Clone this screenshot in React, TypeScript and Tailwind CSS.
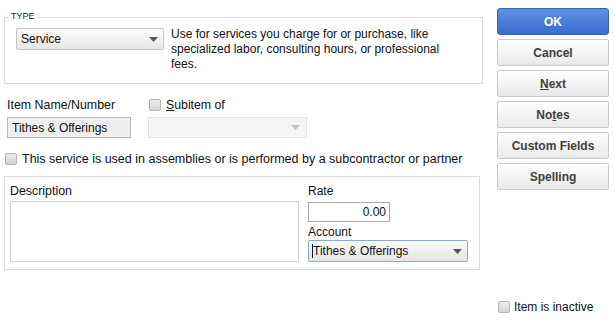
import React from "react";

function Arrow({ light }: { light?: boolean }) {
  return (
    <svg width="9" height="5" viewBox="0 0 9 5" className="shrink-0">
      <path d="M0 0 H9 L4.5 5 Z" fill={light ? "#c4c4c4" : "#555"} />
    </svg>
  );
}

function Check({ className = "" }: { className?: string }) {
  return (
    <span
      className={`inline-block w-[12px] h-[12px] shrink-0 rounded-[2px] border border-[#b4b4b4] bg-gradient-to-b from-[#ececec] to-[#d4d4d4] ${className}`}
    />
  );
}

function Btn({ children, primary }: { children: React.ReactNode; primary?: boolean }) {
  return (
    <div
      className={
        primary
          ? "h-[27px] flex items-center justify-center rounded-[3px] border border-[#3564b8] bg-gradient-to-b from-[#5e91e3] to-[#3a6ccc] text-white font-bold"
          : "h-[27px] flex items-center justify-center rounded-[2px] border border-[#cacaca] bg-gradient-to-b from-[#ffffff] to-[#e9e9e9] text-[#3f3f3f] font-bold"
      }
    >
      {children}
    </div>
  );
}

export default function App() {
  return (
    <div className="w-[615px] h-[327px] bg-white flex font-['Liberation_Sans',Arial,sans-serif] text-[12px] leading-[14px] text-[#111]">
      {/* left part */}
      <div className="w-[479px] ml-[4px] flex flex-col">
        {/* TYPE box */}
        <div className="relative mt-[17px] h-[67px] border border-[#dcdcdc] flex gap-[7px] pl-[11px] pt-[10px]">
          <span className="absolute left-[4px] top-[-8px] bg-white px-[2px] text-[9px] leading-[12px] text-[#222]">TYPE</span>
          <div className="w-[148px] h-[22px] flex items-center justify-between pl-[4px] pr-[5px] border border-[#c6c6c6] rounded-[2px] bg-gradient-to-b from-[#fdfdfd] to-[#e8e8e8]">
            <span>Service</span>
            <Arrow />
          </div>
          <p className="w-[290px] leading-[15px] -mt-[1px]">
            Use for services you charge for or purchase, like specialized labor, consulting hours, or professional fees.
          </p>
        </div>

        {/* Item name row */}
        <div className="flex mt-[14px] pl-[3px]">
          <div className="flex flex-col">
            <span className="text-[12.4px]">Item Name/Number</span>
            <div className="mt-[5px] w-[124px] h-[21px] flex items-center pl-[4px] border border-[#b9b9b9] bg-[#efefef]">
              Tithes &amp; Offerings
            </div>
          </div>
          <div className="flex flex-col ml-[17px]">
            <div className="flex items-center gap-[5px] ml-[1px]">
              <Check />
              <span className="text-[12.3px]">
                <span className="underline">S</span>ubitem of
              </span>
            </div>
            <div className="mt-[5px] w-[159px] h-[21px] flex items-center justify-end pr-[6px] border border-[#e4e4e4] bg-[#f5f5f5]">
              <Arrow light />
            </div>
          </div>
        </div>

        {/* assemblies */}
        <div className="flex items-center gap-[5px] mt-[14px] ml-[1px]">
          <Check />
          <span className="text-[12.5px]">This service is used in assemblies or is performed by a subcontractor or partner</span>
        </div>

        {/* Description box */}
        <div className="mt-[10px] w-[476px] h-[94px] border border-[#dcdcdc] flex pl-[5px] pt-[7px]">
          <div className="flex flex-col">
            <span className="text-[12.4px]">Description</span>
            <div className="mt-[3px] w-[289px] h-[61px] border border-[#d4d4d4] bg-white" />
          </div>
          <div className="flex flex-col ml-[9px]">
            <span>Rate</span>
            <div className="mt-[4px] w-[82px] h-[20px] flex items-center justify-end pr-[3px] border border-[#a9a9a9] bg-white">
              0.00
            </div>
            <span className="mt-[3px]">Account</span>
            <div className="mt-[1px] w-[160px] h-[22px] flex items-center justify-between pl-[3px] pr-[5px] border border-[#8ea6d2] rounded-[2px] bg-gradient-to-b from-[#fafafa] to-[#e6e6e6]">
              <span className="border-l border-[#111]">Tithes &amp; Offerings</span>
              <Arrow />
            </div>
          </div>
        </div>
      </div>

      {/* right column */}
      <div className="ml-[14px] w-[112px] flex flex-col pt-[8px]">
        <div className="flex flex-col gap-[4px]">
          <Btn primary>OK</Btn>
          <Btn>Cancel</Btn>
          <Btn>
            <span>
              <span className="underline">N</span>ext
            </span>
          </Btn>
          <Btn>
            <span>
              No<span className="underline">t</span>es
            </span>
          </Btn>
          <Btn>Custom Fields</Btn>
          <Btn>
            <span>
              Spellin<span className="underline">g</span>
            </span>
          </Btn>
        </div>
        <div className="flex items-center gap-[4px] mt-[110px] ml-[1px]">
          <Check />
          <span>Item is inactive</span>
        </div>
      </div>
    </div>
  );
}
